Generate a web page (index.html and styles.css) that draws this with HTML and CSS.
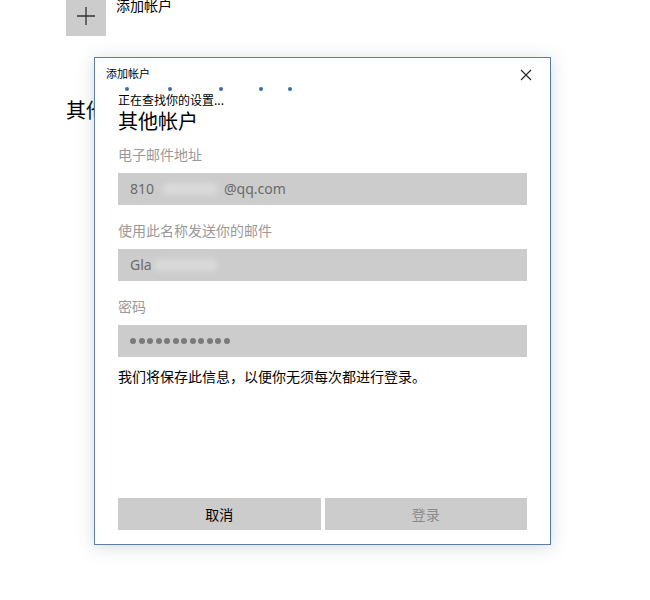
FILE: index.html
```html
<!DOCTYPE html>
<html lang="zh-CN">
<head>
  <meta charset="UTF-8" />
  <title>添加帐户</title>
  <link rel="stylesheet" href="styles.css">
</head>
<body>
  <!-- 背景：帐户设置页 -->
  <div class="page">
    <div class="add-row">
      <div class="add-icon">
        <svg width="20" height="20" viewBox="0 0 20 20"><path d="M10 1v18M1 10h18" stroke="#333" stroke-width="1.3" fill="none"/></svg>
      </div>
      <div class="add-text">添加帐户</div>
    </div>
    <div class="page-title">其他帐户</div>
  </div>

  <!-- 添加帐户对话框 -->
  <div class="dialog">
    <div class="dialog-head">
      <span class="dialog-title">添加帐户</span>
      <svg class="close" width="12" height="12" viewBox="0 0 12 12"><path d="M1 1l10 10M11 1L1 11" stroke="#222" stroke-width="1.1" fill="none"/></svg>
    </div>
    <div class="dialog-body">
      <div class="progress">
        <span class="dot d1"></span><span class="dot d2"></span><span class="dot d3"></span><span class="dot d4"></span><span class="dot d5"></span>
      </div>
      <div class="status">正在查找你的设置...</div>
      <div class="heading">其他帐户</div>

      <div class="label">电子邮件地址</div>
      <div class="field">810<span class="blur b1"></span>@qq.com</div>

      <div class="label">使用此名称发送你的邮件</div>
      <div class="field">Gla<span class="blur b2"></span></div>

      <div class="label">密码</div>
      <div class="field pwd">
        <span></span><span></span><span></span><span></span><span></span><span></span>
        <span></span><span></span><span></span><span></span><span></span><span></span>
      </div>

      <div class="note">我们将保存此信息，以便你无须每次都进行登录。</div>

      <div class="buttons">
        <button class="btn">取消</button>
        <button class="btn disabled">登录</button>
      </div>
    </div>
  </div>
</body>
</html>
```

FILE: styles.css
```css
body, html {
  margin: 0;
  padding: 0;
  background: #fff;
  font-family: "Noto Sans CJK SC", "Liberation Sans", sans-serif;
  color: #000;
}

.page {
  padding-left: 66px;
}

.add-row {
  display: flex;
  margin-top: -4px;
}

.add-icon {
  width: 40px;
  height: 40px;
  background: #cccccc;
  display: flex;
  align-items: center;
  justify-content: center;
}

.add-text {
  margin-left: 10px;
  font-size: 14px;
  line-height: 20px;
  margin-top: -1px;
}

.page-title {
  margin-top: 60px;
  font-size: 20px;
  line-height: 28px;
}

.dialog {
  position: absolute;
  left: 94px;
  top: 57px;
  width: 455px;
  height: 486px;
  background: #fff;
  border: 1px solid #5b7ea3;
  box-shadow: 0 2px 16px rgba(110, 130, 150, 0.3);
  display: flex;
  flex-direction: column;
}

.dialog-head {
  display: flex;
  justify-content: space-between;
  align-items: center;
  padding: 4px 18px 0 11px;
  height: 22px;
}

.dialog-title {
  font-size: 11px;
  line-height: 16px;
}

.close {
  margin-top: 4px;
}

.dialog-body {
  padding: 0 23px;
  display: flex;
  flex-direction: column;
  flex: 1;
}

.progress {
  display: flex;
  height: 4px;
  margin-top: 3px;
}

.dot {
  width: 4px;
  height: 4px;
  border-radius: 50%;
  background: #3c6e9e;
}

.d1 { margin-left: 7px; }
.d2 { margin-left: 39px; }
.d3 { margin-left: 47px; }
.d4 { margin-left: 36px; }
.d5 { margin-left: 25px; }

.status {
  font-size: 12px;
  line-height: 16px;
  margin-top: 1px;
}

.heading {
  font-size: 20px;
  line-height: 26px;
}

.label {
  font-size: 14px;
  line-height: 20px;
  color: #999;
  margin-top: 10px;
}

.field {
  height: 32px;
  background: #cccccc;
  margin-top: 9px;
  margin-bottom: 5px;
  padding-left: 12px;
  font-family: "Noto Sans", "Liberation Sans", sans-serif;
  font-size: 14px;
  line-height: 32px;
  color: #6b6b6b;
  display: flex;
  align-items: center;
}

.blur {
  display: inline-block;
  height: 12px;
  background: #dadada;
  border-radius: 6px;
  filter: blur(3px);
}

.b1 { width: 56px; margin: 0 6px 0 8px; }
.b2 { width: 64px; margin-left: 2px; }

.pwd {
  gap: 2.5px;
}

.pwd span {
  width: 6px;
  height: 6px;
  border-radius: 50%;
  background: #7a7a7a;
}

.note {
  font-size: 14px;
  line-height: 20px;
  margin-top: 4px;
}

.buttons {
  margin-top: auto;
  margin-bottom: 14px;
  display: flex;
  gap: 4px;
}

.btn {
  flex: 1;
  height: 32px;
  border: none;
  background: #cccccc;
  font-family: "Noto Sans CJK SC", sans-serif;
  font-size: 14px;
  color: #000;
  padding: 0;
}

.btn.disabled {
  color: #8a8a8a;
}
```
